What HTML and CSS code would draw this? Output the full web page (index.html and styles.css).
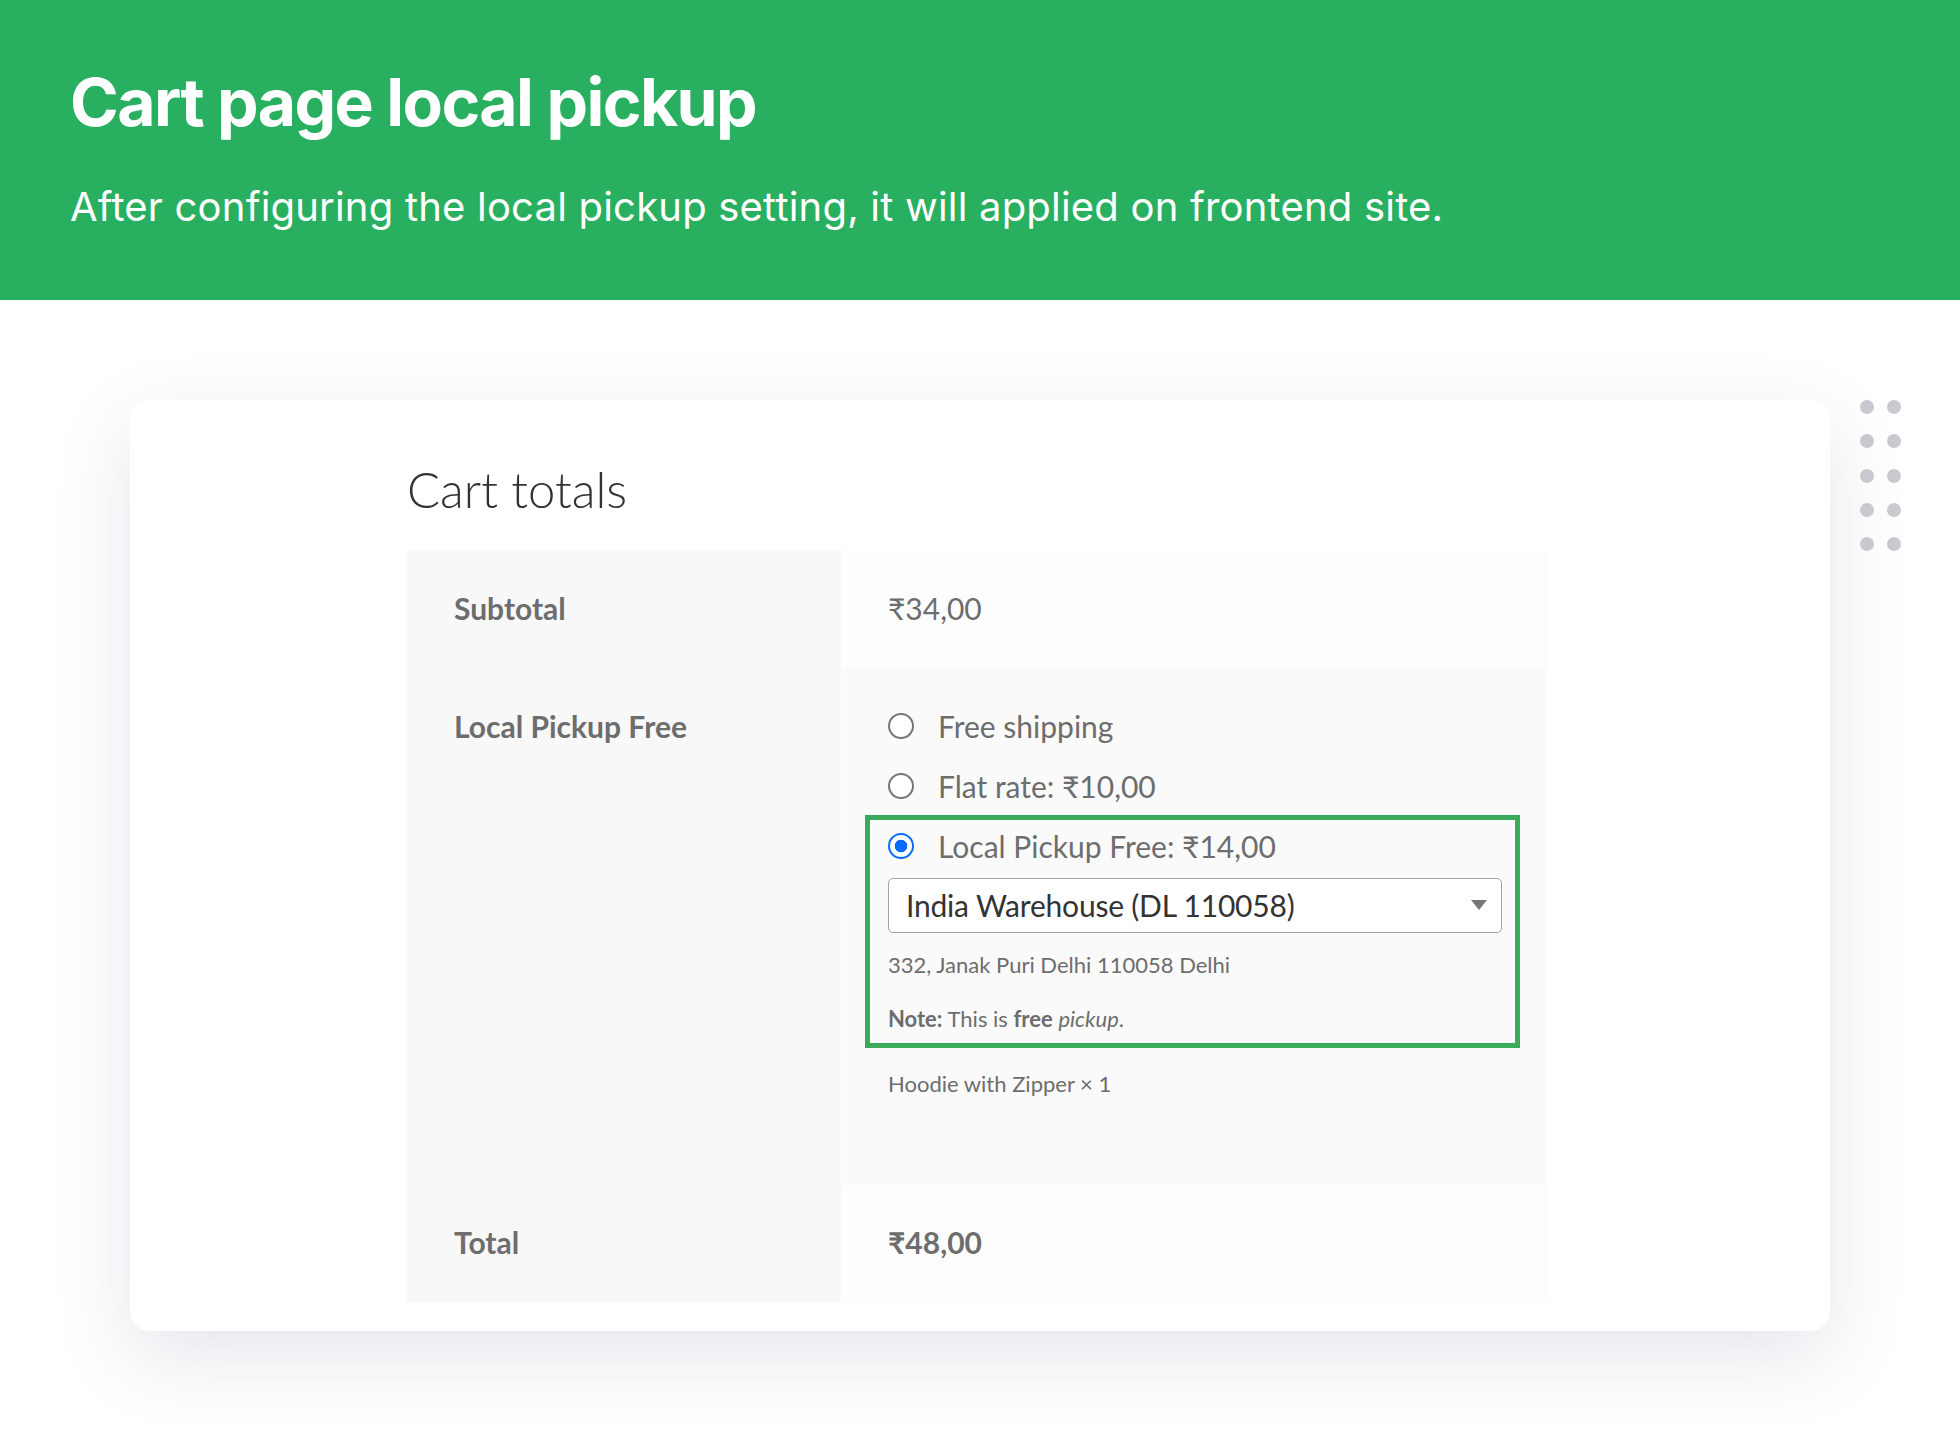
FILE: index.html
```html
<!DOCTYPE html>
<html lang="en">
<head>
<meta charset="utf-8">
<title>Cart page local pickup</title>
<link rel="stylesheet" href="styles.css">
</head>
<body>
<header class="hero">
  <h1 class="hero-title">Cart page local pickup</h1>
  <p class="hero-text">After configuring the local pickup setting, it will applied on frontend site.</p>
</header>
<main class="stage">
  <section class="card">
    <h2 class="cart-title">Cart totals</h2>
    <table class="totals">
      <tbody>
        <tr class="row-subtotal">
          <th>Subtotal</th>
          <td>₹34,00</td>
        </tr>
        <tr class="row-shipping">
          <th>Local Pickup Free</th>
          <td>
            <ul class="methods">
              <li class="method"><span class="radio"></span>Free shipping</li>
              <li class="method"><span class="radio"></span>Flat rate: ₹10,00</li>
            </ul>
            <div class="highlight">
              <div class="method"><span class="radio checked"></span>Local Pickup Free: ₹14,00</div>
              <div class="select">India Warehouse (DL 110058)<span class="arrow"></span></div>
              <p class="address">332, Janak Puri Delhi 110058 Delhi</p>
              <p class="note"><strong>Note:</strong> This is <strong>free</strong> <em>pickup</em>.</p>
            </div>
            <p class="items">Hoodie with Zipper × 1</p>
          </td>
        </tr>
        <tr class="row-total">
          <th>Total</th>
          <td><strong>₹48,00</strong></td>
        </tr>
      </tbody>
    </table>
  </section>
  <div class="dots">
    <span></span><span></span><span></span><span></span><span></span>
    <span></span><span></span><span></span><span></span><span></span>
  </div>
</main>
</body>
</html>
```

FILE: styles.css
```css
* { box-sizing: border-box; }

html, body {
  margin: 0;
  padding: 0;
  background: #ffffff;
}

body {
  width: 1960px;
  height: 1432px;
  overflow: hidden;
  font-family: Lato, "Noto Sans", sans-serif;
}

.hero {
  height: 300px;
  background: #28af60;
  color: #ffffff;
  padding: 62px 0 0 70px;
  font-family: Inter, "Liberation Sans", sans-serif;
}

.hero-title {
  margin: 0;
  font-size: 66px;
  font-weight: 700;
  line-height: normal;
  letter-spacing: -1.6px;
}

.hero-text {
  margin: 40px 0 0;
  font-size: 40px;
  font-weight: 400;
  line-height: normal;
  letter-spacing: 0.2px;
}

.stage {
  position: relative;
  padding: 100px 0 0 130px;
}

.card {
  width: 1700px;
  height: 931px;
  background: #ffffff;
  border-radius: 20px;
  box-shadow: 0 26px 80px rgba(40, 60, 100, 0.13);
  padding: 60px 0 0 277px;
}

.cart-title {
  margin: 0 0 32px;
  font-size: 49px;
  font-weight: 300;
  line-height: 1.2;
  color: #333333;
}

.totals {
  width: 1140px;
  border-collapse: collapse;
  border-spacing: 0;
  font-size: 30px;
  line-height: 46px;
  color: #6d6d6d;
}

.totals th,
.totals td {
  padding: 34px 45px 38px 47px;
  text-align: left;
  vertical-align: top;
}

.totals th {
  width: 434px;
  background: #f8f8f8;
  font-weight: 700;
}

.totals td {
  background: #fdfdfd;
  font-weight: 400;
}

.row-shipping td { background: #fafafa; padding-bottom: 85px; }
.row-total th, .row-total td { padding-bottom: 37px; }
.row-total strong { font-weight: 700; }

.methods {
  list-style: none;
  margin: 0;
  padding: 0;
}

.method {
  display: block;
  white-space: nowrap;
}

.methods .method + .method { margin-top: 14px; }

.radio {
  display: inline-block;
  width: 26px;
  height: 26px;
  border: 2px solid #767676;
  border-radius: 50%;
  background: #ffffff;
  margin-right: 24px;
  vertical-align: baseline;
  position: relative;
  top: 1px;
}

.radio.checked {
  border: 2.5px solid #0a6cff;
  background: radial-gradient(circle, #0a6cff 0 6px, #ffffff 6.6px);
}

.highlight {
  margin: 6px -18px 0 -23px;
  padding: 3px 13px 8px 18px;
  border: 5px solid #3aab5b;
}

.select {
  margin-top: 9px;
  height: 55px;
  border: 1.5px solid #a3a3a3;
  border-radius: 5px;
  background: #ffffff;
  display: flex;
  align-items: center;
  justify-content: space-between;
  padding: 0 14px 0 17px;
  font-size: 30px;
  letter-spacing: -0.2px;
  line-height: 1.2;
  color: #333333;
}

.arrow {
  width: 0;
  height: 0;
  border-left: 8px solid transparent;
  border-right: 8px solid transparent;
  border-top: 10px solid #777777;
}

.address,
.note,
.items {
  margin: 0;
  font-size: 22px;
  line-height: 33px;
}

.address { margin-top: 15px; }
.note { margin-top: 21px; }
.note strong { font-weight: 700; }
.items { margin-top: 19px; }

.dots {
  position: absolute;
  left: 1860px;
  top: 100px;
  display: grid;
  grid-template-columns: 14px 14px;
  grid-auto-rows: 14px;
  column-gap: 13px;
  row-gap: 20.3px;
}

.dots span {
  width: 14px;
  height: 14px;
  border-radius: 50%;
  background: #c9cacf;
}
```
